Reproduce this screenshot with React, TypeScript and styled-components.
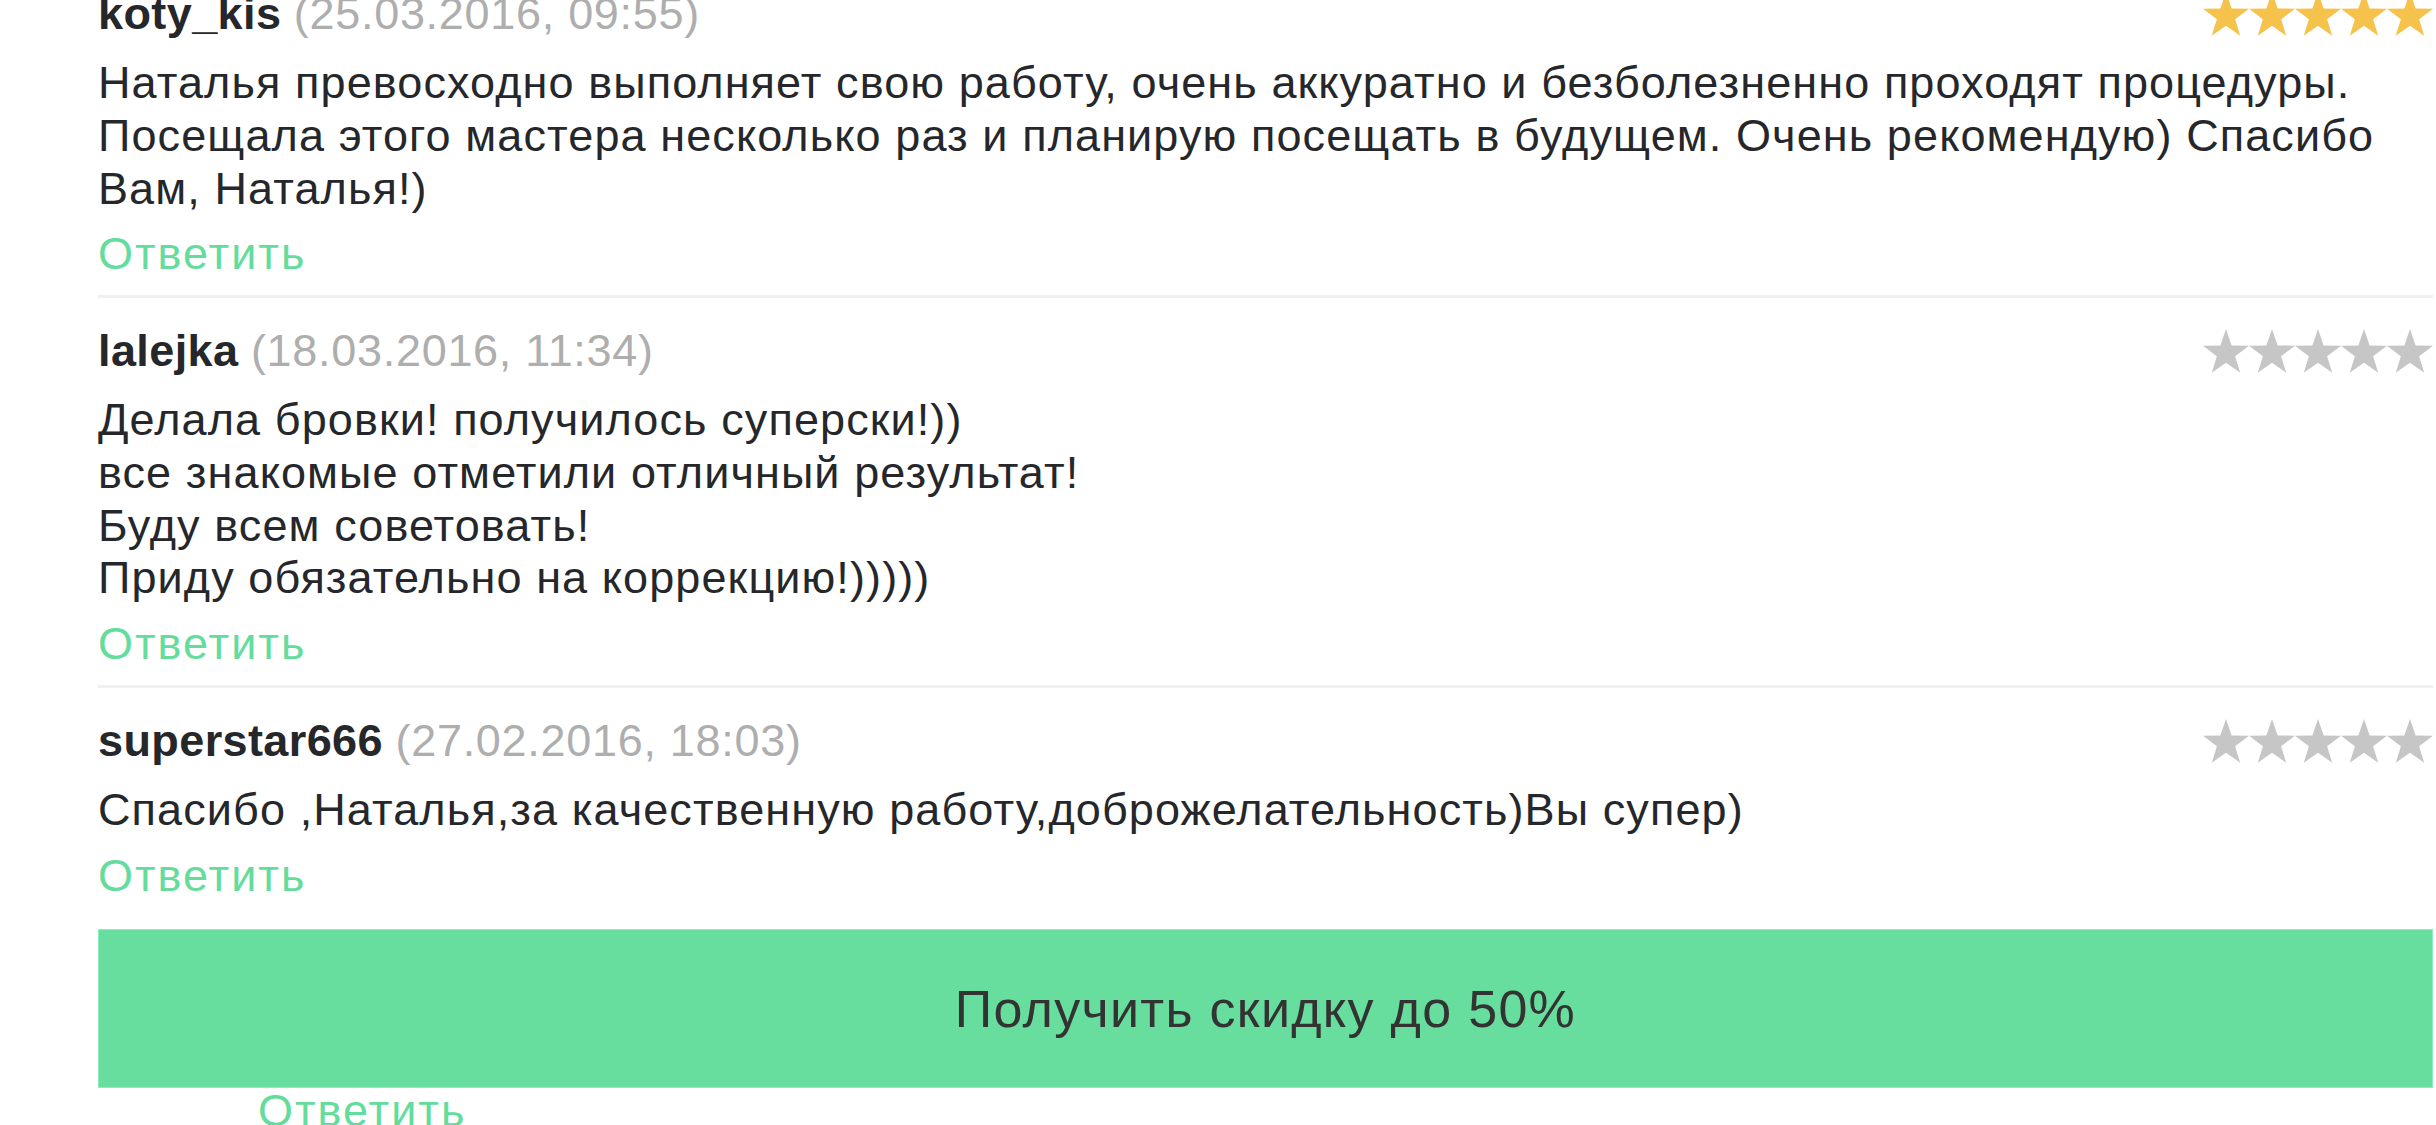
import React from "react";
import styled, { createGlobalStyle } from "styled-components";

const GlobalStyle = createGlobalStyle`
  html, body {
    margin: 0;
    padding: 0;
    background: #fff;
  }
  body {
    font-family: "Liberation Sans", Arial, Helvetica, sans-serif;
    -webkit-font-smoothing: antialiased;
  }
`;

const Page = styled.div`
  position: relative;
  width: 2436px;
  height: 1125px;
  overflow: hidden;
  background: #fff;
`;

const List = styled.ul`
  list-style: none;
  margin: -39px 3px 0 98px;
  padding: 0;
`;

const Item = styled.li<{ $reply?: boolean }>`
  margin-left: ${(p) => (p.$reply ? "160px" : "0")};
  padding: ${(p) => (p.$reply ? "31px" : "27px")} 0 14px;
  border-bottom: 3px solid #f0f0f0;
`;

const Header = styled.div`
  display: flex;
  align-items: center;
  justify-content: space-between;
  font-size: 45px;
  line-height: 52.7px;
  margin-bottom: 16.5px;
`;

const Author = styled.span`
  font-weight: 700;
  color: #25272b;
  letter-spacing: 0.4px;
`;

const Date = styled.span`
  color: #aeaeae;
  letter-spacing: 0.7px;
`;

const Body = styled.p`
  margin: 0 0 13px;
  font-size: 45px;
  line-height: 52.7px;
  letter-spacing: 1.1px;
  color: #25272b;
  white-space: pre-line;
`;

const ReplyLink = styled.a`
  display: block;
  font-size: 45px;
  line-height: 52.7px;
  letter-spacing: 2px;
  color: #63dc9c;
  text-decoration: none;
`;

const Stars = styled.div`
  display: flex;
  flex-shrink: 0;
`;

const Footer = styled.div`
  position: absolute;
  left: 98px;
  right: 3px;
  top: 905px;
  padding-top: 24px;
  background: #fff;
`;

const DiscountButton = styled.button`
  width: 100%;
  height: 159px;
  box-sizing: border-box;
  display: flex;
  align-items: center;
  justify-content: center;
  background: #68de9e;
  border: 1px solid #8eedc0;
  font-family: "Liberation Sans", Arial, Helvetica, sans-serif;
  font-size: 52px;
  letter-spacing: 1.3px;
  color: #333;
  padding: 0;
  cursor: pointer;
`;

const starPoints = (() => {
  const cx = 23;
  const cy = 24.2;
  const R = 24.2;
  const r = 9.6;
  const pts: string[] = [];
  for (let i = 0; i < 10; i++) {
    const a = ((-90 + i * 36) * Math.PI) / 180;
    const rad = i % 2 === 0 ? R : r;
    pts.push(`${(cx + rad * Math.cos(a)).toFixed(2)},${(cy + rad * Math.sin(a)).toFixed(2)}`);
  }
  return pts.join(" ");
})();

const Rating: React.FC<{ value: number }> = ({ value }) => (
  <Stars>
    {[0, 1, 2, 3, 4].map((i) => (
      <svg key={i} width="46" height="44" viewBox="0 0 46 44">
        <polygon points={starPoints} fill={i < value ? "#f5c24c" : "#c6c6c6"} />
      </svg>
    ))}
  </Stars>
);

interface Review {
  author: string;
  date: string;
  rating: number;
  text: string;
  reply?: boolean;
}

const reviews: Review[] = [
  {
    author: "koty_kis",
    date: "(25.03.2016, 09:55)",
    rating: 5,
    text:
      "Наталья превосходно выполняет свою работу, очень аккуратно и безболезненно проходят процедуры. Посещала этого мастера несколько раз и планирую посещать в будущем. Очень рекомендую) Спасибо Вам, Наталья!)",
  },
  {
    author: "lalejka",
    date: "(18.03.2016, 11:34)",
    rating: 0,
    text:
      "Делала бровки! получилось суперски!))\nвсе знакомые отметили отличный результат!\nБуду всем советовать!\nПриду обязательно на коррекцию!)))))",
  },
  {
    author: "superstar666",
    date: "(27.02.2016, 18:03)",
    rating: 0,
    text: "Спасибо ,Наталья,за качественную работу,доброжелательность)Вы супер)",
  },
  {
    author: "Наталья",
    date: "(28.02.2016, 10:12)",
    rating: 0,
    text: "Спасибо за отзыв!",
    reply: true,
  },
];

const App: React.FC = () => {
  return (
    <Page>
      <GlobalStyle />
      <List>
        {reviews.map((r, index) => (
          <Item key={index} $reply={r.reply}>
            <Header>
              <span>
                <Author>{r.author}</Author> <Date>{r.date}</Date>
              </span>
              {!r.reply && <Rating value={r.rating} />}
            </Header>
            <Body>{r.text}</Body>
            <ReplyLink href="#">Ответить</ReplyLink>
          </Item>
        ))}
      </List>
      <Footer>
        <DiscountButton>Получить скидку до 50%</DiscountButton>
      </Footer>
    </Page>
  );
};

export default App;
